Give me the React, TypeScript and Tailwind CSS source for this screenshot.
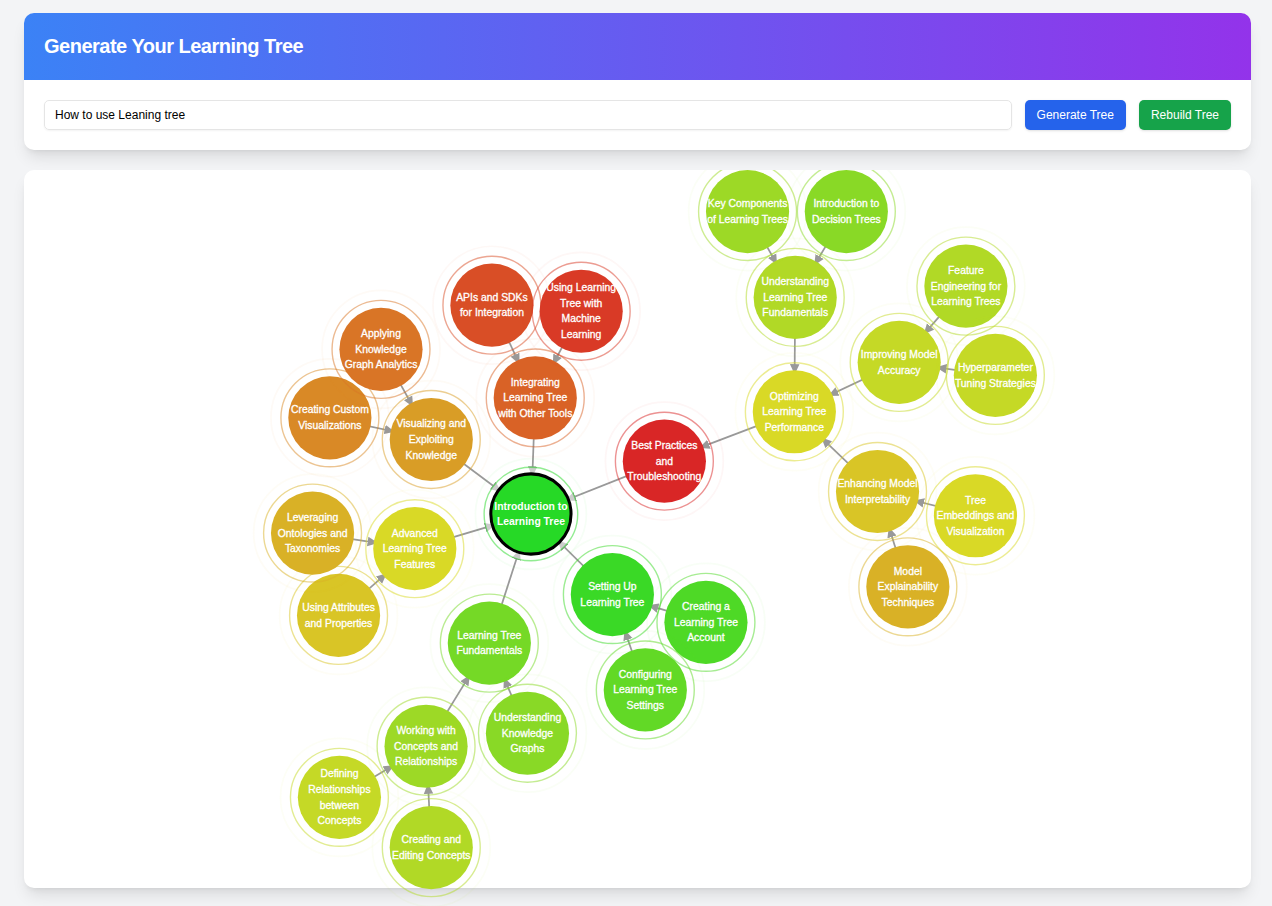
import React, { useState } from 'react';
import { clsx } from 'clsx';

interface TreeNode {
  id: string;
  parent?: string;
  x: number;
  y: number;
  color: string;
  lines: string[];
}

// Later nodes are painted over earlier ones
const nodes: TreeNode[] = [
  { id: 'root', x: 585, y: 397, color: '#26d926', lines: ['Introduction to', 'Learning Tree'] },
  { id: 'setup', parent: 'root', x: 679, y: 490, color: '#3ad926', lines: ['Setting Up', 'Learning Tree'] },
  { id: 'account', parent: 'setup', x: 787, y: 522, color: '#4ed926', lines: ['Creating a', 'Learning Tree', 'Account'] },
  { id: 'settings', parent: 'setup', x: 717, y: 600, color: '#62d926', lines: ['Configuring', 'Learning Tree', 'Settings'] },
  { id: 'fundamentals', parent: 'root', x: 537, y: 546, color: '#75d926', lines: ['Learning Tree', 'Fundamentals'] },
  { id: 'graphs', parent: 'fundamentals', x: 581, y: 650, color: '#89d926', lines: ['Understanding', 'Knowledge', 'Graphs'] },
  { id: 'concepts', parent: 'fundamentals', x: 464, y: 665, color: '#9dd926', lines: ['Working with', 'Concepts and', 'Relationships'] },
  { id: 'editing', parent: 'concepts', x: 470, y: 782, color: '#b1d926', lines: ['Creating and', 'Editing Concepts'] },
  { id: 'defining', parent: 'concepts', x: 364, y: 724, color: '#c5d926', lines: ['Defining', 'Relationships', 'between', 'Concepts'] },
  { id: 'advanced', parent: 'root', x: 451, y: 437, color: '#d9d926', lines: ['Advanced', 'Learning Tree', 'Features'] },
  { id: 'attributes', parent: 'advanced', x: 363, y: 514, color: '#d9c526', lines: ['Using Attributes', 'and Properties'] },
  { id: 'ontologies', parent: 'advanced', x: 333, y: 419, color: '#d9b126', lines: ['Leveraging', 'Ontologies and', 'Taxonomies'] },
  { id: 'visualizing', parent: 'root', x: 470, y: 311, color: '#d99d26', lines: ['Visualizing and', 'Exploiting', 'Knowledge'] },
  { id: 'custom', parent: 'visualizing', x: 353, y: 286, color: '#d98926', lines: ['Creating Custom', 'Visualizations'] },
  { id: 'analytics', parent: 'visualizing', x: 412, y: 207, color: '#d97526', lines: ['Applying', 'Knowledge', 'Graph Analytics'] },
  { id: 'integrating', parent: 'root', x: 590, y: 263, color: '#d96226', lines: ['Integrating', 'Learning Tree', 'with Other Tools'] },
  { id: 'apis', parent: 'integrating', x: 540, y: 156, color: '#d94e26', lines: ['APIs and SDKs', 'for Integration'] },
  { id: 'ml', parent: 'integrating', x: 643, y: 163, color: '#d93a26', lines: ['Using Learning', 'Tree with', 'Machine', 'Learning'] },
  { id: 'practices', parent: 'root', x: 739, y: 336, color: '#d92626', lines: ['Best Practices', 'and', 'Troubleshooting'] },
  { id: 'optimizing', parent: 'practices', x: 889, y: 279, color: '#d9d926', lines: ['Optimizing', 'Learning Tree', 'Performance'] },
  { id: 'understanding', parent: 'optimizing', x: 890, y: 147, color: '#b1d926', lines: ['Understanding', 'Learning Tree', 'Fundamentals'] },
  { id: 'components', parent: 'understanding', x: 835, y: 48, color: '#9dd926', lines: ['Key Components', 'of Learning Trees'] },
  { id: 'decision', parent: 'understanding', x: 949, y: 48, color: '#89d926', lines: ['Introduction to', 'Decision Trees'] },
  { id: 'accuracy', parent: 'optimizing', x: 1010, y: 222, color: '#c5d926', lines: ['Improving Model', 'Accuracy'] },
  { id: 'feature', parent: 'accuracy', x: 1087, y: 134, color: '#b1d926', lines: ['Feature', 'Engineering for', 'Learning Trees'] },
  { id: 'hyper', parent: 'accuracy', x: 1121, y: 237, color: '#c5d926', lines: ['Hyperparameter', 'Tuning Strategies'] },
  { id: 'interpret', parent: 'optimizing', x: 985, y: 371, color: '#d9c526', lines: ['Enhancing Model', 'Interpretability'] },
  { id: 'explain', parent: 'interpret', x: 1020, y: 481, color: '#d9b126', lines: ['Model', 'Explainability', 'Techniques'] },
  { id: 'embeddings', parent: 'interpret', x: 1098, y: 399, color: '#d9d926', lines: ['Tree', 'Embeddings and', 'Visualization'] }
];

const LINE_HEIGHT = 18;

function TreeLink({ node }: { node: TreeNode }) {
  const parent = nodes.find((n) => n.id === node.parent);
  if (!parent) return null;

  return (
    <line
      x1={node.x}
      y1={node.y}
      x2={parent.x}
      y2={parent.y}
      stroke="#999"
      strokeWidth={2}
      markerEnd="url(#arrow)"
    />
  );
}

function TreeBubble({ node }: { node: TreeNode }) {
  const isRoot = !node.parent;
  const firstLine = 4 - ((node.lines.length - 1) * LINE_HEIGHT) / 2;

  return (
    <g transform={`translate(${node.x} ${node.y})`}>
      {isRoot && <circle r={54} fill="#fff" fillOpacity={0.5} />}
      <circle r={isRoot ? 64 : 68} fill="none" stroke={node.color} strokeOpacity={0.04} strokeWidth={2} />
      <circle r={isRoot ? 54 : 56.5} fill="none" stroke={node.color} strokeOpacity={0.5} strokeWidth={1.6} />
      <circle
        r={isRoot ? 46.3 : 48}
        fill={node.color}
        stroke={isRoot ? '#000' : 'none'}
        strokeWidth={3.5}
      />
      <text
        textAnchor="middle"
        stroke="#fff"
        strokeWidth={isRoot ? 0 : 0.35}
        className={clsx('fill-white text-[12px]', isRoot ? 'font-bold' : 'font-normal')}
      >
        {node.lines.map((line, i) => (
          <tspan key={line} x={0} y={firstLine + i * LINE_HEIGHT}>
            {line}
          </tspan>
        ))}
      </text>
    </g>
  );
}

function LearningTree() {
  return (
    <svg viewBox="0 0 1416 849" className="-mb-[18px] block w-full" role="img" aria-label="Learning tree">
      <defs>
        {/* refX pulls the head back from the node centre to its edge */}
        <marker
          id="arrow"
          viewBox="0 -6 12 12"
          refX={55}
          refY={0}
          markerWidth={12}
          markerHeight={12}
          markerUnits="userSpaceOnUse"
          orient="auto"
        >
          <path d="M0,-5.5L12,0L0,5.5" fill="#999" />
        </marker>
      </defs>
      {nodes.map((node) => (
        <TreeLink key={node.id} node={node} />
      ))}
      {nodes.map((node) => (
        <TreeBubble key={node.id} node={node} />
      ))}
    </svg>
  );
}

export default function App() {
  const [topic, setTopic] = useState('How to use Leaning tree');

  return (
    <main className="flex min-h-screen flex-col gap-5 bg-[#f3f4f6] pt-[13px] pr-[21px] pb-[18px] pl-6 font-['Liberation_Sans',Arial,sans-serif]">
      <section className="overflow-hidden rounded-[10px] bg-white shadow-lg">
        <header className="bg-linear-to-r/srgb from-[#3b82f6] to-[#9333ea] p-5">
          <h1 className="text-[20px] leading-[27px] font-bold tracking-tight text-white">
            Generate Your Learning Tree
          </h1>
        </header>
        <form className="flex gap-[13px] p-5" onSubmit={(e) => e.preventDefault()}>
          <input
            type="text"
            aria-label="Topic"
            value={topic}
            onChange={(e) => setTopic(e.target.value)}
            className="h-[30px] min-w-0 flex-1 rounded-[5px] border border-[#e5e5e5] px-[10px] text-xs text-black shadow-xs outline-none"
          />
          <button
            type="submit"
            className="h-[30px] rounded-[5px] bg-[#2563eb] px-3 text-xs font-medium text-white shadow-sm hover:bg-[#1d4ed8]"
          >
            Generate Tree
          </button>
          <button
            type="button"
            className="h-[30px] rounded-[5px] bg-[#16a34a] px-3 text-xs font-medium text-white shadow-sm hover:bg-[#15803d]"
          >
            Rebuild Tree
          </button>
        </form>
      </section>

      <section className="rounded-[10px] bg-white shadow-lg">
        <LearningTree />
      </section>
    </main>
  );
}
